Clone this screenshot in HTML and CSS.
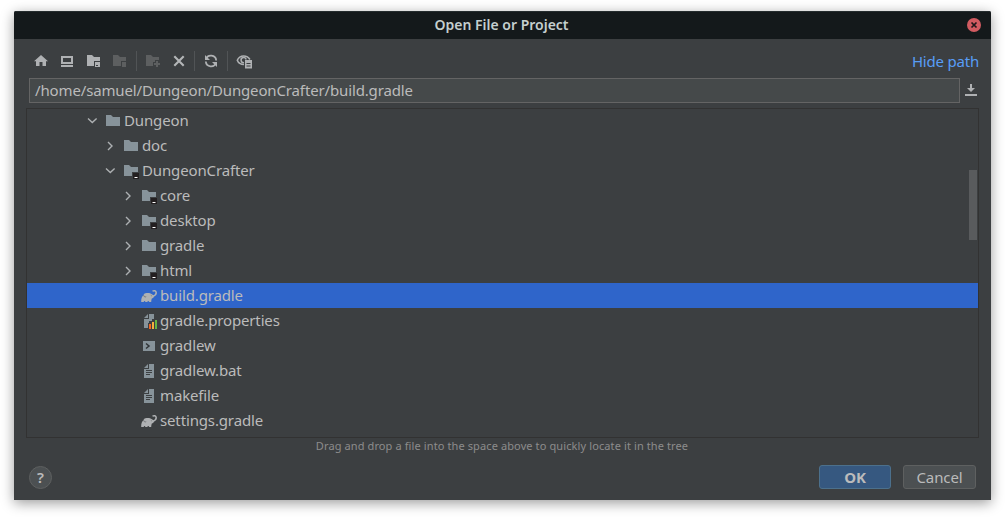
FILE: index.html
```html
<!DOCTYPE html>
<html lang="en">
<head>
<meta charset="utf-8">
<title>Open File or Project</title>
<link rel="stylesheet" href="styles.css">
</head>
<body>
<svg width="0" height="0" class="defs">
  <defs>
    <symbol id="right" viewBox="0 0 16 16"><path d="M6 4l4 4-4 4" fill="none" stroke="#adb0b2" stroke-width="1.4"/></symbol>
    <symbol id="down" viewBox="0 0 16 16"><path d="M4 5.500l4.300 4 4.300-4" fill="none" stroke="#adb0b2" stroke-width="1.4"/></symbol>
    <symbol id="folder" viewBox="0 0 16 16"><path fill="#87939a" d="M1 2h5l2 2h7v9H1z"/></symbol>
    <symbol id="module" viewBox="0 0 16 16"><path fill="#87939a" d="M1 2h5l2 2h7v5H9v4H1z"/><path fill="#231f20" d="M10 10h6v6h-6z"/><path fill="#fff" d="M11.500 14h3v1h-3z"/></symbol>
    <symbol id="gradle" viewBox="0 0 16 16"><path fill="#afb1b3" d="M.2 14C0 11 1 8.300 2.500 7 3 5.800 4 5.200 5.500 5c2-.2 4 0 5.400 1.200C12.200 7 13 7.800 13 8.500c-.4 1.200-1.200 1.900-2.200 2-.4 1-.6 2.200-.6 3.500H8.200c-.2-1.300-1.600-1.300-1.900 0H4.400c-.2-1.300-1.500-1.300-1.700 0z"/><path fill="none" stroke="#afb1b3" stroke-width="1.500" d="M11.800 8.300c2-.6 3.500-2 3.400-3.700-.1-2-2.300-2.500-3.700-1.300"/><path fill="none" stroke="#3c3f41" stroke-width=".5" d="M2.600 7.200c.2 1.500 1.400 2.100 2.600 1.500M9.800 7.300l.9.600"/></symbol>
    <symbol id="text" viewBox="0 0 16 16"><path fill="#87939a" d="M3 5l4-4v4zM8 1h5v14H3V6h5z"/><path fill="#3c3f41" d="M5 7h6v1H5zM5 9h6v1H5zM5 11h4v1H5z"/></symbol>
    <symbol id="props" viewBox="0 0 16 16"><path fill="#87939a" d="M3 5l4-4v4zM8 1h5v5h-2v2H8v2H7v5H3V6h5z"/><path fill="#f26522" d="M8 11h2v5H8z"/><path fill="#f4af3d" d="M11 9h2v7h-2z"/><path fill="#62b543" d="M14 7h2v9h-2z"/></symbol>
    <symbol id="shell" viewBox="0 0 16 16"><path fill="#87939a" d="M2 3h12v10H2z"/><path d="M5 5.500l3 2.500-3 2.500" fill="none" stroke="#303437" stroke-width="1.500"/></symbol>
  </defs>
</svg>
<main class="window">
  <header class="titlebar">
    <h1 class="title">Open File or Project</h1>
    <svg class="close" viewBox="0 0 14 14"><circle cx="7" cy="7" r="7" fill="#d25b61"/><path d="M4.500 4.500l5 5m0-5l-5 5" stroke="#20181b" stroke-width="1.700"/></svg>
  </header>
  <nav class="toolbar">
    <svg class="icon" viewBox="0 0 16 16"><path fill="#afb1b3" d="M8 2l7 6.300h-2V13H9.500V9h-3v4H3V8.300H1z"/></svg>
    <svg class="icon" viewBox="0 0 16 16"><path fill="#afb1b3" fill-rule="evenodd" d="M2 3h12v8H2zM4 5v4h8V5zM2 12h12v2H2z"/></svg>
    <svg class="icon" viewBox="0 0 16 16"><path fill="#afb1b3" fill-rule="evenodd" d="M1 2h5l2 2h6v4H8v5H1zM9 9h5v5H9zM10 12v1h2v-1z"/></svg>
    <svg class="icon" viewBox="0 0 16 16"><path fill="#5d5f60" d="M1 2h5l2 2h6v4H9v5H1zM10 9h4v5h-4z"/></svg>
    <i class="sep"></i>
    <svg class="icon" viewBox="0 0 16 16"><path fill="#5d5f60" d="M1 2h5l2 2h6v3h-4v2H8v4H1zM11 8h2v2h2v2h-2v2h-2v-2H9v-2h2z"/></svg>
    <svg class="icon" viewBox="0 0 16 16"><path d="M3.300 3.300l9.400 9.400m0-9.400l-9.400 9.400" stroke="#b4b6b8" stroke-width="2.100"/></svg>
    <i class="sep"></i>
    <svg class="icon" viewBox="0 0 16 16"><path d="M3 6.500a5.200 5.200 0 0 1 10.200 1M13 9.500a5.200 5.200 0 0 1-10.200-1" fill="none" stroke="#afb1b3" stroke-width="1.800"/><path fill="#afb1b3" d="M2 2v5h5zM14 14V9H9z"/></svg>
    <i class="sep"></i>
    <svg class="icon eye" viewBox="0 0 16 16"><path d="M8 11.500C4.500 11.500 2.200 9.500 1.300 7.200 2.500 4.500 4.800 3 7.600 3s5 1.200 6.300 3.500" fill="none" stroke="#afb1b3" stroke-width="1.600"/><path d="M8 9.600A2.600 2.600 0 1 1 10.200 6.500" fill="none" stroke="#afb1b3" stroke-width="1.500"/><path fill="#afb1b3" d="M9 7h7v8.500H9z"/><path fill="#3c3f41" d="M10.500 10h4v1h-4zM10.500 12.500h4v1h-4z"/></svg>
    <a class="link">Hide path</a>
  </nav>
  <div class="pathrow">
    <div class="path">/home/samuel/Dungeon/DungeonCrafter/build.gradle</div>
    <svg class="history" viewBox="0 0 12 12"><path fill="#afb1b3" d="M5 0h2v4h3L6 8 2 4h3zM0 10h12v2H0z"/></svg>
  </div>
  <section class="tree">
    <div class="row"><svg><use href="#down"/></svg><svg><use href="#folder"/></svg><span>Dungeon</span></div>
    <div class="row d1"><svg><use href="#right"/></svg><svg><use href="#folder"/></svg><span>doc</span></div>
    <div class="row d1"><svg><use href="#down"/></svg><svg><use href="#module"/></svg><span>DungeonCrafter</span></div>
    <div class="row d2"><svg><use href="#right"/></svg><svg><use href="#module"/></svg><span>core</span></div>
    <div class="row d2"><svg><use href="#right"/></svg><svg><use href="#module"/></svg><span>desktop</span></div>
    <div class="row d2"><svg><use href="#right"/></svg><svg><use href="#folder"/></svg><span>gradle</span></div>
    <div class="row d2"><svg><use href="#right"/></svg><svg><use href="#module"/></svg><span>html</span></div>
    <div class="row d2 selected"><svg></svg><svg><use href="#gradle"/></svg><span>build.gradle</span></div>
    <div class="row d2"><svg></svg><svg><use href="#props"/></svg><span>gradle.properties</span></div>
    <div class="row d2"><svg></svg><svg><use href="#shell"/></svg><span>gradlew</span></div>
    <div class="row d2"><svg></svg><svg><use href="#text"/></svg><span>gradlew.bat</span></div>
    <div class="row d2"><svg></svg><svg><use href="#text"/></svg><span>makefile</span></div>
    <div class="row d2"><svg></svg><svg><use href="#gradle"/></svg><span>settings.gradle</span></div>
    <div class="thumb"></div>
  </section>
  <p class="hint">Drag and drop a file into the space above to quickly locate it in the tree</p>
  <footer class="footer">
    <button class="help">?</button>
    <button class="btn primary">OK</button>
    <button class="btn">Cancel</button>
  </footer>
</main>
</body>
</html>
```
FILE: styles.css
```css
* { box-sizing: border-box; }
body {
  margin: 0;
  padding: 11px 14px 17px;
  height: 517px;
  overflow: hidden;
  background: #fff;
  font: 15px/25px "Noto Sans", sans-serif;
  letter-spacing: -.14px;
  color: #bbb;
}
.defs { position: absolute; }
.window {
  height: 489px;
  background: #3c3f41;
  border-radius: 2px 2px 0 0;
  box-shadow: 0 3px 13px rgba(0, 0, 0, .4);
}
.titlebar {
  display: grid;
  grid-template-columns: 22px 1fr 24px;
  height: 28px;
  border-top: 1px solid #252c2e;
  border-radius: 2px 2px 0 0;
  background: #14191b;
}
.title {
  grid-column: 2;
  margin: 0;
  text-align: center;
  font: 600 14px/25px "Noto Sans", sans-serif;
  letter-spacing: 0;
  color: #c5cfcf;
}
.close { width: 14px; height: 14px; margin-top: 6px; }
.toolbar {
  display: flex;
  align-items: center;
  height: 39px;
  padding: 5px 12px 0 19px;
}
.icon { width: 16px; height: 16px; flex: none; margin-right: 10.400px; }
.sep { width: 1px; height: 20px; background: #515456; margin: 0 8px 0 -3px; }
.eye { margin-left: .6px; }
.link { margin-left: auto; color: #589df6; letter-spacing: -.2px; }
.pathrow { display: flex; align-items: center; padding-left: 15px; }
.path {
  width: 931px;
  height: 25px;
  padding-left: 5px;
  line-height: 23px;
  border: 1px solid #646464;
  background: #45494a;
}
.history { width: 12px; height: 12px; margin: -1px 0 0 5px; }
.tree {
  position: relative;
  width: 953px;
  height: 330px;
  margin: 5px 0 0 12px;
  border: 1px solid #323232;
  overflow: hidden;
}
.row {
  display: flex;
  height: 25px;
  padding-left: 57px;
}
.row:first-child { margin-top: -1px; }
.row svg { width: 16px; height: 16px; flex: none; margin: 5px 5px 0 0; }
.row svg + svg { margin-right: 3px; }
.d1 { padding-left: 75px; }
.d2 { padding-left: 93px; }
.selected { background: #2f65ca; }
.thumb {
  position: absolute;
  top: 61px;
  right: 1px;
  width: 8px;
  height: 70px;
  background: #595b5d;
}
.hint {
  margin: 0;
  padding-right: 1px;
  text-align: center;
  font-size: 11px;
  line-height: 15px;
  letter-spacing: .11px;
  color: #8c8c8c;
}
.footer {
  display: flex;
  align-items: center;
  padding: 12px 15px 0;
}
.help, .btn {
  padding: 0;
  border: 1px solid #5e6060;
  background: #4c5052;
  font: 15px/22px "Noto Sans", sans-serif;
  letter-spacing: -.1px;
  color: #bbb;
}
.help { width: 23px; height: 23px; border-radius: 50%; font-weight: 600; line-height: 21px; margin-right: auto; }
.btn { width: 73px; height: 24px; border-radius: 3px; }
.primary {
  width: 72px;
  margin-right: 12px;
  border-color: #4c708c;
  background: #365880;
  font-weight: 700;
}
```
